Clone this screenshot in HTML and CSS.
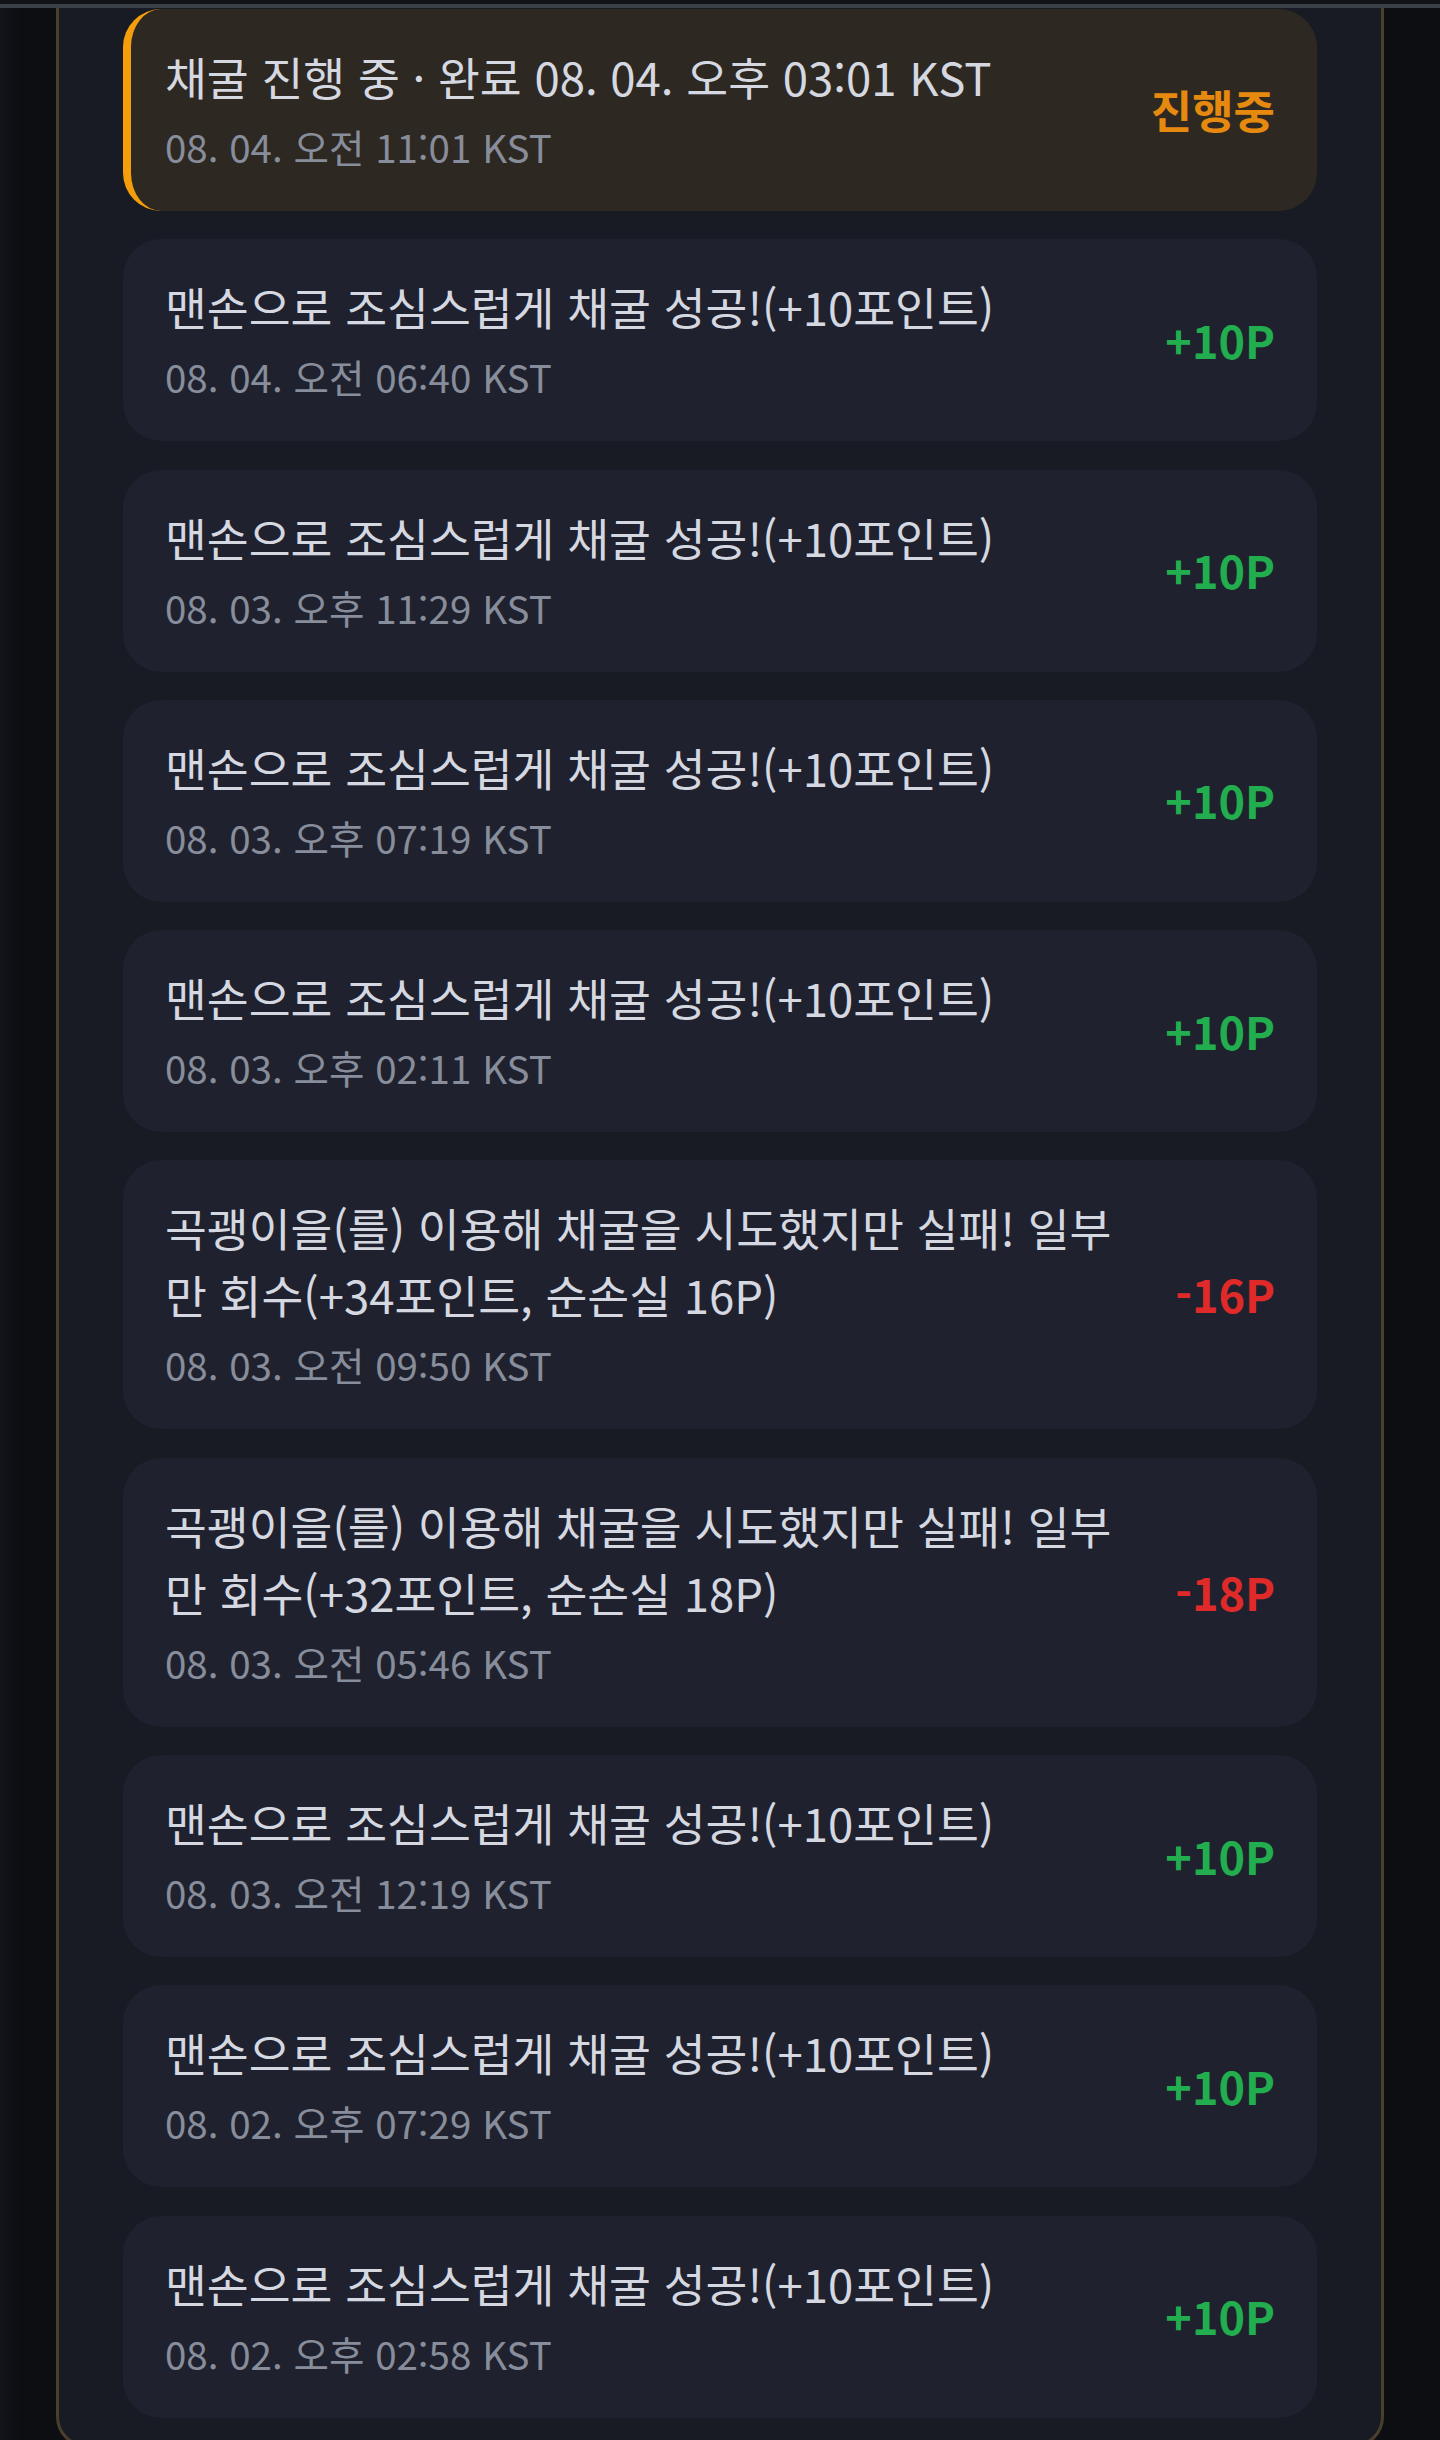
FILE: index.html
```html
<!DOCTYPE html>
<html lang="ko">
<head>
<meta charset="utf-8">
<title>채굴 기록</title>
<link rel="stylesheet" href="styles.css">
</head>
<body>
<div class="topbar"></div>
<div class="page">
  <main class="panel">
    <ul class="list">
      <li class="item item--active">
        <div class="item__text">
          <p class="item__title">채굴 진행 중 · 완료 08. 04. 오후 03:01 KST</p>
          <p class="item__time">08. 04. 오전 11:01 KST</p>
        </div>
        <span class="item__amount amount--pending">진행중</span>
      </li>
      <li class="item">
        <div class="item__text">
          <p class="item__title">맨손으로 조심스럽게 채굴 성공!(+10포인트)</p>
          <p class="item__time">08. 04. 오전 06:40 KST</p>
        </div>
        <span class="item__amount amount--plus">+10P</span>
      </li>
      <li class="item">
        <div class="item__text">
          <p class="item__title">맨손으로 조심스럽게 채굴 성공!(+10포인트)</p>
          <p class="item__time">08. 03. 오후 11:29 KST</p>
        </div>
        <span class="item__amount amount--plus">+10P</span>
      </li>
      <li class="item">
        <div class="item__text">
          <p class="item__title">맨손으로 조심스럽게 채굴 성공!(+10포인트)</p>
          <p class="item__time">08. 03. 오후 07:19 KST</p>
        </div>
        <span class="item__amount amount--plus">+10P</span>
      </li>
      <li class="item">
        <div class="item__text">
          <p class="item__title">맨손으로 조심스럽게 채굴 성공!(+10포인트)</p>
          <p class="item__time">08. 03. 오후 02:11 KST</p>
        </div>
        <span class="item__amount amount--plus">+10P</span>
      </li>
      <li class="item">
        <div class="item__text">
          <p class="item__title">곡괭이을(를) 이용해 채굴을 시도했지만 실패! 일부 만 회수(+34포인트, 순손실 16P)</p>
          <p class="item__time">08. 03. 오전 09:50 KST</p>
        </div>
        <span class="item__amount amount--minus">-16P</span>
      </li>
      <li class="item">
        <div class="item__text">
          <p class="item__title">곡괭이을(를) 이용해 채굴을 시도했지만 실패! 일부 만 회수(+32포인트, 순손실 18P)</p>
          <p class="item__time">08. 03. 오전 05:46 KST</p>
        </div>
        <span class="item__amount amount--minus">-18P</span>
      </li>
      <li class="item">
        <div class="item__text">
          <p class="item__title">맨손으로 조심스럽게 채굴 성공!(+10포인트)</p>
          <p class="item__time">08. 03. 오전 12:19 KST</p>
        </div>
        <span class="item__amount amount--plus">+10P</span>
      </li>
      <li class="item">
        <div class="item__text">
          <p class="item__title">맨손으로 조심스럽게 채굴 성공!(+10포인트)</p>
          <p class="item__time">08. 02. 오후 07:29 KST</p>
        </div>
        <span class="item__amount amount--plus">+10P</span>
      </li>
      <li class="item">
        <div class="item__text">
          <p class="item__title">맨손으로 조심스럽게 채굴 성공!(+10포인트)</p>
          <p class="item__time">08. 02. 오후 02:58 KST</p>
        </div>
        <span class="item__amount amount--plus">+10P</span>
      </li>
    </ul>
  </main>
</div>
</body>
</html>
```

FILE: styles.css
```css
* {
  box-sizing: border-box;
}

html,
body {
  margin: 0;
  padding: 0;
}

body {
  height: 2440px;
  overflow: hidden;
  background: linear-gradient(90deg, #111419 0px, #0c0e12 20px, #0c0e12 100%);
  font-family: "Noto Sans CJK KR", "Noto Sans", sans-serif;
  color: #d3d6de;
}

.topbar {
  height: 8px;
  background: #121317;
  border-bottom: 4px solid #3c4048;
}

.page {
  display: flex;
  justify-content: center;
}

.panel {
  width: 1328px;
  background: #181b24;
  border: 3px solid #4a3f2c;
  border-top: none;
  border-radius: 0 0 30px 30px;
  padding: 1px 64px 26px;
}

.list {
  list-style: none;
  margin: 0;
  padding: 0;
  display: flex;
  flex-direction: column;
  gap: 28.3px;
}

.item {
  display: flex;
  align-items: center;
  gap: 40px;
  background: #1f222e;
  border-radius: 38px;
  padding: 34px 42px 36px;
}

.item--active {
  background: #2e2822;
  border-left: 8px solid #f59e0b;
  padding-left: 34px;
}

.item__text {
  flex: 1;
  min-width: 0;
}

.item__title {
  margin: 0;
  font-size: 45.5px;
  font-weight: 400;
  line-height: 67px;
  color: #d5d8e0;
}

.item__time {
  margin: 8px 0 0;
  font-size: 38.5px;
  font-weight: 400;
  line-height: 57px;
  color: #878d9b;
}

.item__amount {
  flex-shrink: 0;
  font-size: 45px;
  font-weight: 700;
  line-height: 1;
}

.amount--plus {
  color: #22ad4f;
}

.amount--minus {
  color: #e02a2a;
}

.amount--pending {
  color: #e5890f;
}
```
